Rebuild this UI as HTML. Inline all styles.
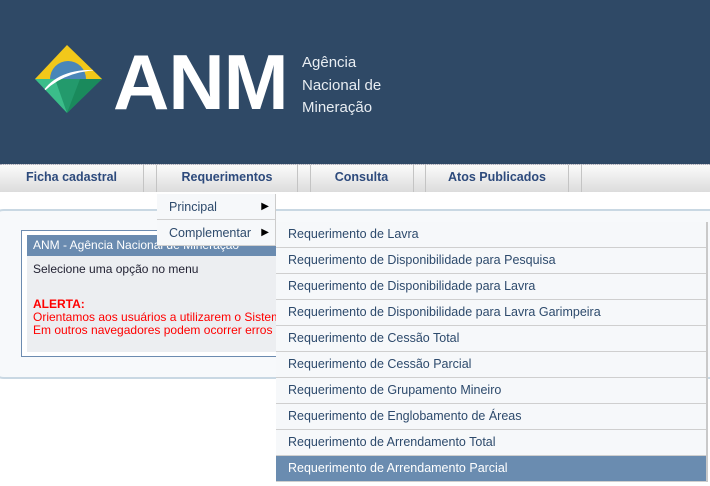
<!DOCTYPE html>
<html><head><meta charset="utf-8"><style>
*{margin:0;padding:0;box-sizing:border-box}
body{width:710px;height:486px;overflow:hidden;background:#fff;font-family:"Liberation Sans",Arial,sans-serif;position:relative}
.hdr{position:absolute;left:0;top:0;width:710px;height:164px;background:#2f4966}
.anm{position:absolute;left:113px;top:37px;font-family:"Liberation Sans",sans-serif;font-weight:bold;font-size:78px;color:#fff;letter-spacing:-1px;line-height:90px}
.sub{position:absolute;left:302px;top:52px;font-size:15px;color:#e8edf2;line-height:22.5px}
.bar{position:absolute;left:0;top:164px;width:710px;height:28px;background:linear-gradient(#fbfbfb,#dcdcdc);border-top:1px dotted #aab}
.mi{position:absolute;top:0;height:27px;font-weight:bold;font-size:12.5px;color:#2d4a7c;text-align:center;line-height:25px}
.sep{position:absolute;top:0;width:1px;height:27px;background:#c4c4c4}
.panel{position:absolute;left:-10px;top:209px;width:740px;height:170px;border:2px solid #c9d8e3;border-radius:14px;background:#f7f9fb}
.box{position:absolute;left:21px;top:230px;width:300px;height:127px;border:1px solid #6c8bb0;background:#fff;overflow:hidden}
.box .in{position:absolute;left:5px;top:4px;right:0;bottom:4px;background:#eceef1;white-space:nowrap}
.box .h{height:21px;background:#6a8bb0;color:#fff;font-size:12px;line-height:20px;padding-left:6px}
.txt{font-size:12px;color:#223;padding-left:6px}
.red{font-size:12px;color:#f00;padding-left:6px;line-height:13px}
.dd{position:absolute;left:157px;top:194px;width:119px;background:#f6f8fa;border-right:1px solid #ccc}
.dd div{height:26px;font-size:12.5px;color:#2d4a6c;line-height:26px;padding-left:12px;border-bottom:1px solid #d0d0d0;position:relative}
.dd div span{position:absolute;right:6px;top:0;font-size:10px;color:#000}
.sm{position:absolute;left:276px;top:222px;width:432px;background:#f6f8fa;border-right:2px solid #c9c9c9}
.sm div{height:26px;font-size:12.5px;color:#2d4a6c;line-height:25px;padding-left:12px;border-bottom:1px solid #cfcfcf}
.sm div.a{background:#6a8cb0;color:#fff}
</style></head><body>
<div class="hdr">
<svg style="position:absolute;left:34px;top:44px" width="70" height="70" viewBox="34 44 70 70">
<defs><clipPath id="c"><polygon points="67,45 35,79 67,113 102,79"/></clipPath></defs>
<g clip-path="url(#c)">
<rect x="34" y="44" width="70" height="36" fill="#f2c81a"/>
<rect x="34" y="79" width="70" height="36" fill="#239a6c"/>
<polygon points="35,79 55,79 67,113" fill="#3bbd8a"/>
<polygon points="102,79 80,79 67,113" fill="#1a8a5c"/>
<path d="M50,79 A18,18 0 0 1 86,79 Z" fill="#4a86b8"/>
<path d="M40,96 Q55,68 98,70 Q60,72 40,96Z" fill="#fff"/>
</g></svg>
<div class="anm">ANM</div>
<div class="sub">Agência<br>Nacional de<br>Mineração</div>
</div>
<div class="bar">
<div class="mi" style="left:0;width:143px">Ficha cadastral</div>
<div class="sep" style="left:143px"></div><div class="sep" style="left:156px"></div>
<div class="mi" style="left:157px;width:140px">Requerimentos</div>
<div class="sep" style="left:297px"></div><div class="sep" style="left:310px"></div>
<div class="mi" style="left:311px;width:101px">Consulta</div>
<div class="sep" style="left:413px"></div><div class="sep" style="left:425px"></div>
<div class="mi" style="left:426px;width:142px">Atos Publicados</div>
<div class="sep" style="left:568px"></div><div class="sep" style="left:581px"></div>
</div>
<div class="panel"></div>
<div class="box"><div class="in">
<div class="h">ANM - Agência Nacional de Mineração</div>
<div class="txt" style="margin-top:6px">Selecione uma opção no menu</div>
<div class="red" style="margin-top:22px;font-weight:bold">ALERTA:</div>
<div class="red">Orientamos aos usuários a utilizarem o Sistema</div>
<div class="red">Em outros navegadores podem ocorrer erros</div>
</div></div>
<div class="dd"><div>Principal<span>▶</span></div><div>Complementar<span>▶</span></div></div>
<div class="sm">
<div>Requerimento de Lavra</div>
<div>Requerimento de Disponibilidade para Pesquisa</div>
<div>Requerimento de Disponibilidade para Lavra</div>
<div>Requerimento de Disponibilidade para Lavra Garimpeira</div>
<div>Requerimento de Cessão Total</div>
<div>Requerimento de Cessão Parcial</div>
<div>Requerimento de Grupamento Mineiro</div>
<div>Requerimento de Englobamento de Áreas</div>
<div>Requerimento de Arrendamento Total</div>
<div class="a">Requerimento de Arrendamento Parcial</div>
</div>
</body></html>
